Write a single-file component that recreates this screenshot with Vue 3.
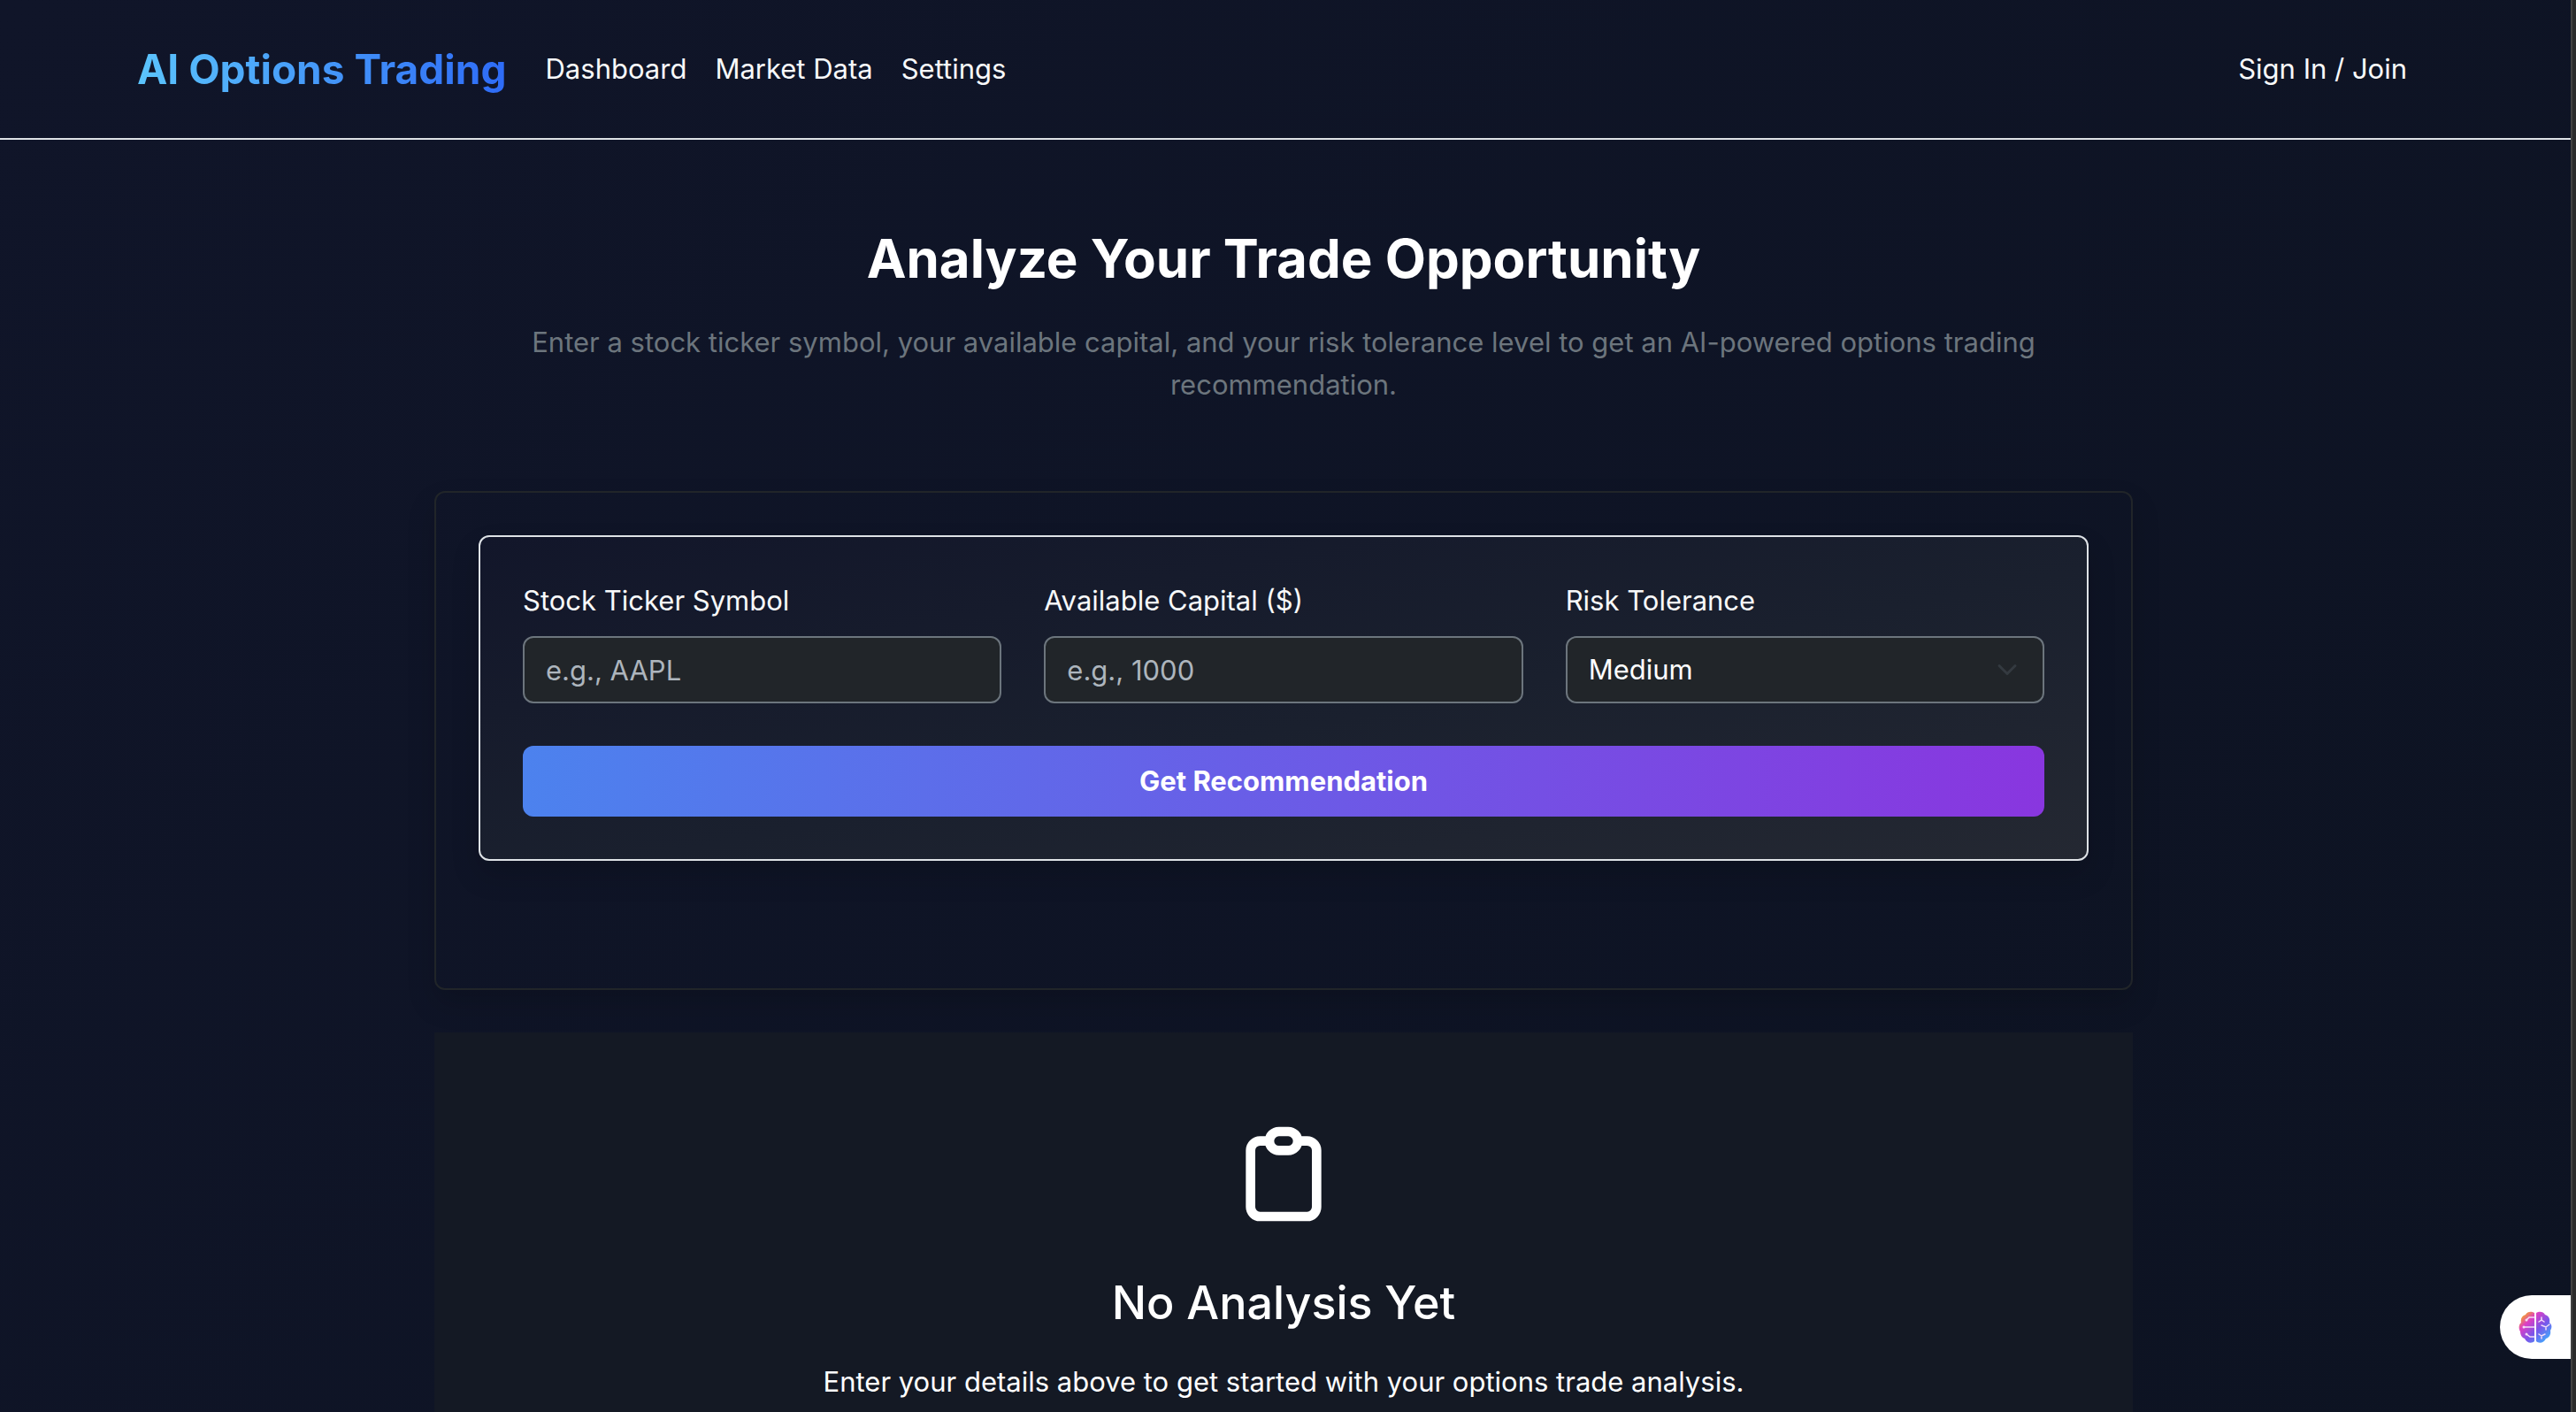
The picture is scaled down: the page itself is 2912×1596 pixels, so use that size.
<script setup>
import { ref } from 'vue'

const links = ['Dashboard', 'Market Data', 'Settings']
const ticker = ref('')
const capital = ref('')
const risk = ref('Medium')
</script>

<template>
  <div class="shell">
    <div class="page">
      <header class="topbar">
        <nav class="container nav">
          <a class="brand" href="#">AI Options Trading</a>
          <a v-for="link in links" :key="link" class="nav-link" href="#">{{ link }}</a>
          <a class="nav-link account" href="#">Sign In / Join</a>
        </nav>
      </header>

      <main class="content">
        <section class="intro">
          <h1>Analyze Your Trade Opportunity</h1>
          <p>
            Enter a stock ticker symbol, your available capital, and your risk tolerance level to
            get an AI-powered options trading recommendation.
          </p>
        </section>

        <section class="panel">
          <form class="form" @submit.prevent>
            <div class="field">
              <label for="ticker">Stock Ticker Symbol</label>
              <input id="ticker" v-model="ticker" type="text" placeholder="e.g., AAPL" />
            </div>
            <div class="field">
              <label for="capital">Available Capital ($)</label>
              <input id="capital" v-model="capital" type="text" placeholder="e.g., 1000" />
            </div>
            <div class="field">
              <label for="risk">Risk Tolerance</label>
              <div class="select-wrap">
                <select id="risk" v-model="risk">
                  <option>Low</option>
                  <option>Medium</option>
                  <option>High</option>
                </select>
                <svg class="chevron" viewBox="0 0 16 16" aria-hidden="true">
                  <path d="m2 5 6 6 6-6" />
                </svg>
              </div>
            </div>
            <button class="submit" type="submit">Get Recommendation</button>
          </form>
        </section>

        <section class="empty">
          <svg class="clipboard" viewBox="0 0 24 24" aria-hidden="true">
            <path
              d="M9 5H7a2 2 0 0 0-2 2v12a2 2 0 0 0 2 2h10a2 2 0 0 0 2-2V7a2 2 0 0 0-2-2h-2M9 5a2 2 0 0 0 2 2h2a2 2 0 0 0 2-2M9 5a2 2 0 0 1 2-2h2a2 2 0 0 1 2 2"
            />
          </svg>
          <h2>No Analysis Yet</h2>
          <p>Enter your details above to get started with your options trade analysis.</p>
        </section>
      </main>

      <button class="assistant" type="button" aria-label="Open assistant">
        <svg viewBox="0 0 38 36" aria-hidden="true">
          <defs>
            <linearGradient id="brain" x1="0" y1="0" x2="1" y2="1">
              <stop offset="0.1" stop-color="#f5a623" />
              <stop offset="0.3" stop-color="#dd3fc4" />
              <stop offset="0.58" stop-color="#7a55ea" />
              <stop offset="0.88" stop-color="#45a5fb" />
            </linearGradient>
          </defs>
          <path
            fill="url(#brain)"
            d="M18 2C15 0 10 0 8 4 4 5 2 9 3 13 0 15 0 20 2 23 2 27 4 30 7 31 9 36 15 37 18 34ZM20 2C23 0 28 0 30 4 34 5 36 9 35 13 38 15 38 19 36 22 37 27 34 30 31 31 29 36 23 37 20 34Z"
          />
          <g class="brain-lines">
            <path d="M18 7h-6l-3 3M18 18H6M18 29h-5l-4-3" />
            <path d="M26 7v3l-3 2M26 10l3 2M26 16l5 2 4-3M31 18v3M23 26l3 2 4-2M26 28v3" />
          </g>
          <g fill="#f3dcf8">
            <circle cx="9" cy="10" r="1.5" />
            <circle cx="6" cy="18" r="1.5" />
            <circle cx="9" cy="26" r="1.5" />
          </g>
        </svg>
      </button>
    </div>
    <div class="edge"></div>
  </div>
</template>

<style>
body {
  background: #0d1322;
}
</style>

<style scoped>
.shell {
  display: grid;
  grid-template-columns: 1fr 6px;
  height: 100vh;
  overflow: hidden;
  font-family: Inter, 'Liberation Sans', sans-serif;
  font-size: 31px;
  line-height: 48px;
  color: #f8f9fa;
}

.shell *,
.shell *::before {
  box-sizing: border-box;
}

.page {
  min-width: 0;
  overflow: hidden;
  background: linear-gradient(135deg, #101529, #0d1322);
}

.edge {
  border-left: 2px solid #424242;
  background: #2b2b2b;
}

.topbar {
  padding: 42px 4px 42px 0;
  border-bottom: 2px solid #dee2e6;
}

.container {
  max-width: 2640px;
  margin: 0 auto;
  padding: 0 24px;
}

.nav {
  display: flex;
  align-items: center;
}

.brand {
  margin-right: 28px;
  font-size: 46px;
  font-weight: 700;
  line-height: 72px;
  text-decoration: none;
  color: transparent;
  background: linear-gradient(90deg, #5bc4fc, #2e6bf6);
  background-clip: text;
  -webkit-background-clip: text;
}

.nav-link {
  padding: 0 16px;
  color: inherit;
  text-decoration: none;
}

.account {
  margin-left: auto;
  margin-right: 10px;
}

.content {
  padding: 96px 4px 0 0;
}

.intro,
.panel,
.empty {
  max-width: 1920px;
  margin: 0 auto;
}

.intro {
  text-align: center;
}

h1 {
  margin: 0 0 32px;
  font-size: 60px;
  font-weight: 700;
  line-height: 77px;
  color: #fff;
}

.intro p {
  max-width: 1800px;
  margin: 0 auto 96px;
  color: #6c757d;
}

.panel {
  padding: 48px 48px 144px;
  border: 2px solid #212529;
  border-radius: 12px;
  box-shadow: 0 16px 32px rgba(0, 0, 0, 0.15);
}

.form {
  display: grid;
  grid-template-columns: repeat(3, 1fr);
  gap: 48px;
  padding: 48px;
  border: 2px solid #dee2e6;
  border-radius: 12px;
  background: linear-gradient(to bottom right, #12162a, #1a202e 55%, #242832);
  box-shadow: 0 16px 32px rgba(0, 0, 0, 0.15);
}

.field {
  display: grid;
  gap: 16px;
  min-width: 0;
}

input,
select {
  width: 100%;
  height: 76px;
  padding: 0 24px;
  border: 2px solid #6c757d;
  border-radius: 12px;
  background: #212529;
  color: #fff;
  font: inherit;
  appearance: none;
}

input::placeholder {
  color: #adb5bd;
  opacity: 1;
}

.select-wrap {
  position: relative;
}

.chevron {
  position: absolute;
  top: 26px;
  right: 30px;
  width: 24px;
  height: 24px;
  fill: none;
  stroke: #343a40;
  stroke-width: 2;
  stroke-linecap: round;
  stroke-linejoin: round;
  pointer-events: none;
}

.submit {
  grid-column: 1 / -1;
  height: 80px;
  padding: 0 24px;
  border: 0;
  border-radius: 12px;
  background: linear-gradient(90deg, #4c82ee, #8936df);
  color: #fff;
  font: inherit;
  font-weight: 700;
}

.empty {
  margin-top: 48px;
  padding: 96px 48px;
  background: #141924;
  text-align: center;
}

.clipboard {
  display: block;
  width: 128px;
  height: 128px;
  margin: 0 auto 48px;
  fill: none;
  stroke: #fff;
  stroke-width: 2;
  stroke-linecap: round;
  stroke-linejoin: round;
}

h2 {
  margin: 0 0 32px;
  font-size: 52px;
  font-weight: 500;
  line-height: 67px;
  color: #fff;
}

.empty p {
  margin: 0;
  color: #fff;
}

.assistant {
  position: absolute;
  right: 6px;
  bottom: 60px;
  display: flex;
  align-items: center;
  width: 80px;
  height: 72px;
  padding: 0 0 0 21px;
  border: 0;
  border-radius: 36px 0 0 36px;
  background: #fff;
}

.assistant svg {
  width: 38px;
  height: 36px;
}

.brain-lines {
  fill: none;
  stroke: #f3dcf8;
  stroke-width: 1.5;
  stroke-linecap: round;
}
</style>
